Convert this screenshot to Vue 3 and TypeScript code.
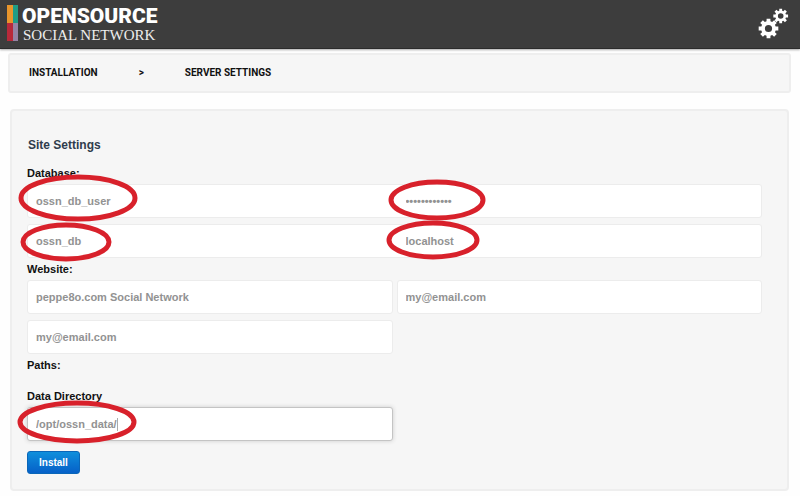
<script setup lang="ts">
import { ref } from 'vue'

const dbUser = ref('ossn_db_user')
const dbPassword = ref('ossnpassword')
const dbName = ref('ossn_db')
const dbHost = ref('localhost')
const siteName = ref('peppe8o.com Social Network')
const ownerEmail = ref('my@email.com')
const notifyEmail = ref('my@email.com')
const dataDir = ref('/opt/ossn_data/')

// Outline of an eight-toothed gear with a round hole in the middle
function gear(cx: number, cy: number, outer: number, inner: number, hole: number): string {
  const points: string[] = []
  for (let i = 0; i < 8; i++) {
    const mid = (i * Math.PI) / 4
    const corners: [number, number][] = [
      [inner, -0.27],
      [outer, -0.19],
      [outer, 0.19],
      [inner, 0.27],
    ]
    for (const [r, off] of corners) {
      points.push(`${(cx + r * Math.cos(mid + off)).toFixed(2)} ${(cy + r * Math.sin(mid + off)).toFixed(2)}`)
    }
  }
  return `M${points.join('L')}ZM${cx - hole} ${cy}a${hole} ${hole} 0 1 0 ${hole * 2} 0a${hole} ${hole} 0 1 0 ${-hole * 2} 0Z`
}

const bigGear = gear(10.5, 20.5, 10, 7.4, 3.6)
const smallGear = gear(22.7, 8, 7.5, 5.4, 2.8)
</script>

<template>
  <header class="topbar">
    <div class="logo">
      <svg class="mark" width="11" height="36" viewBox="0 0 11 36" aria-hidden="true">
        <rect width="6" height="18" fill="#e8952c" />
        <rect x="6" width="5" height="18" fill="#1f9c85" />
        <rect y="18" width="6" height="18" fill="#b8293a" />
        <rect x="6" y="18" width="5" height="18" fill="#9583a5" />
      </svg>
      <div class="wordmark">
        <span class="name">OPENSOURCE</span>
        <span class="tagline">SOCIAL NETWORK</span>
      </div>
    </div>
    <svg class="gears" width="32" height="32" viewBox="0 0 32 32" aria-hidden="true">
      <path :d="bigGear" fill="#fff" fill-rule="evenodd" />
      <path :d="smallGear" fill="#fff" fill-rule="evenodd" />
    </svg>
  </header>

  <nav class="crumbs">
    <span>INSTALLATION</span>
    <span>&gt;</span>
    <span>SERVER SETTINGS</span>
  </nav>

  <main class="panel">
    <form @submit.prevent>
      <h1>Site Settings</h1>

      <label id="database-caption" class="caption" for="db-user">Database:</label>
      <div class="rows">
        <div class="row joined">
          <div class="field">
            <input id="db-user" v-model="dbUser" type="text" />
            <svg class="ring ring-user" width="120" height="48" aria-hidden="true">
              <ellipse cx="60" cy="24" rx="57" ry="21" />
            </svg>
          </div>
          <div class="field">
            <input v-model="dbPassword" type="password" aria-labelledby="database-caption" />
            <svg class="ring ring-password" width="98" height="42" aria-hidden="true">
              <ellipse cx="49" cy="21" rx="46" ry="18" />
            </svg>
          </div>
        </div>
        <div class="row joined">
          <div class="field">
            <input v-model="dbName" type="text" aria-labelledby="database-caption" />
            <svg class="ring ring-name" width="92" height="40" aria-hidden="true">
              <ellipse cx="46" cy="20" rx="43" ry="17" />
            </svg>
          </div>
          <div class="field">
            <input v-model="dbHost" type="text" aria-labelledby="database-caption" />
            <svg class="ring ring-host" width="94" height="40" aria-hidden="true">
              <ellipse cx="47" cy="20" rx="44" ry="17" />
            </svg>
          </div>
        </div>
      </div>

      <label id="website-caption" class="caption" for="site-name">Website:</label>
      <div class="rows">
        <div class="row">
          <div class="field"><input id="site-name" v-model="siteName" type="text" /></div>
          <div class="field"><input v-model="ownerEmail" type="text" aria-labelledby="website-caption" /></div>
        </div>
        <div class="row">
          <div class="field"><input v-model="notifyEmail" type="text" aria-labelledby="website-caption" /></div>
        </div>
      </div>

      <div class="caption paths">Paths:</div>
      <label class="caption" for="data-dir">Data Directory</label>
      <div class="row">
        <div class="field">
          <input id="data-dir" v-model="dataDir" class="active" type="text" />
          <span class="caret"></span>
          <svg class="ring ring-dir" width="120" height="44" aria-hidden="true">
            <ellipse cx="60" cy="22" rx="57" ry="19" />
          </svg>
        </div>
      </div>

      <button type="submit">Install</button>
    </form>
  </main>
</template>

<style>
body {
  background: #fefefe;
  font-family: "Liberation Sans", Arial, sans-serif;
}
</style>

<style scoped>
.topbar {
  display: flex;
  justify-content: space-between;
  align-items: flex-start;
  box-sizing: border-box;
  height: 49px;
  padding: 5px 10px 0 7px;
  background: #3d3d3d;
  border-bottom: 1px solid #2c2c2c;
  box-shadow: 0 1px 2px #aaa;
}
.logo {
  display: flex;
  gap: 4px;
}
.wordmark {
  display: flex;
  flex-direction: column;
  color: #fff;
  white-space: nowrap;
}
.name {
  font: 900 21px/22px Roboto, sans-serif;
}
.tagline {
  padding-left: 1px;
  font: 15px/16px "Liberation Serif", serif;
  color: #eee;
}
.gears {
  margin-top: 3px;
}
.crumbs {
  display: flex;
  align-items: center;
  gap: 41px;
  box-sizing: border-box;
  height: 40px;
  margin: 4px 9px 0 8px;
  padding: 0 19px;
  background: #f6f6f6;
  border: 2px solid #eee;
  border-radius: 3px;
  font: 700 10px/16px Roboto, sans-serif;
  color: #111;
}
.panel {
  margin: 16px 11px 0 10px;
  padding: 25px 25px 15px 15px;
  background: #f6f6f6;
  border: 2px solid #eee;
  border-radius: 4px;
}
h1 {
  margin: 0 0 8px;
  padding-left: 1px;
  font-size: 12px;
  line-height: 18px;
  color: #2f3c4c;
}
.caption {
  display: block;
  font-size: 11px;
  font-weight: 700;
  line-height: 22px;
  color: #111;
}
.paths {
  margin-bottom: 9px;
}
.rows {
  display: grid;
  gap: 6px;
}
.row {
  display: grid;
  grid-template-columns: 1fr 1fr;
  gap: 4px;
}
.joined {
  background: #fff;
  box-shadow: inset 0 0 0 1px #ececec;
  border-radius: 3px;
}
.field {
  position: relative;
}
input {
  display: block;
  box-sizing: border-box;
  width: 100%;
  height: 34px;
  margin: 0;
  padding: 0 8px;
  background: #fff;
  border: 1px solid #ececec;
  border-radius: 3px;
  outline: none;
  font: 700 11px/16px "Liberation Sans", Arial, sans-serif;
  color: #929292;
}
.joined input {
  background: transparent;
  border-color: transparent;
}
input.active {
  border-color: #c4c4c4;
  box-shadow: 0 0 4px #ccc;
}
.caret {
  position: absolute;
  top: 11px;
  left: 90px;
  width: 1px;
  height: 13px;
  background: #aaa;
}
.ring {
  position: absolute;
  z-index: 1;
  pointer-events: none;
}
.ring ellipse {
  fill: none;
  stroke: #d8212b;
  stroke-width: 5;
}
.ring-user {
  top: -10px;
  left: -9px;
}
.ring-password {
  top: -5px;
  left: -9px;
}
.ring-name {
  top: -2px;
  left: -7px;
}
.ring-host {
  top: -4px;
  left: -11px;
}
.ring-dir {
  top: -7px;
  left: -10px;
}
button {
  display: block;
  height: 23px;
  margin-top: 10px;
  padding: 0 11px;
  background: linear-gradient(#0f8fdc, #0660c8);
  border: 1px solid #0a66b8;
  border-radius: 3px;
  font: 700 10px/16px "Liberation Sans", Arial, sans-serif;
  color: #fff;
}
</style>
